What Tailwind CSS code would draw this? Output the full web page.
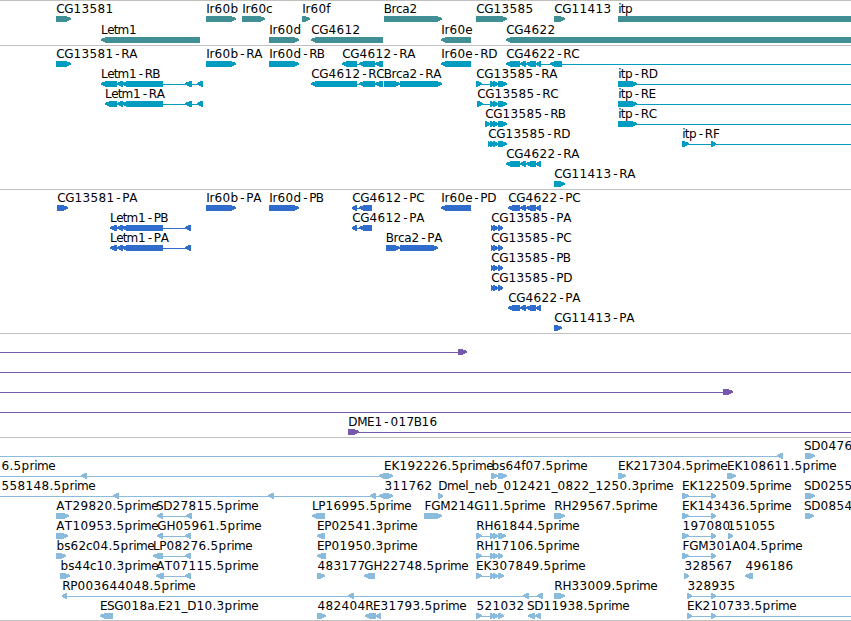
<!DOCTYPE html>
<html lang="en">
  <head>
    <meta charset="UTF-8" />
    <meta name="viewport" content="width=device-width, initial-scale=1.0" />
    <title>Genome Browser</title>
    <script src="https://cdn.jsdelivr.net/npm/@tailwindcss/browser@4"></script>
  </head>
  <body class="bg-white overflow-hidden">
    <main class="flex flex-col w-[851px] h-[621px] border-b border-[#c0c0c0] font-['DejaVu_Sans',sans-serif] text-[12px]">
      <section class="h-[45px] border-t border-[#c0c0c0]">
        <svg id="genes" class="block w-full h-full fill-[#408f95]" viewBox="0 1 851 44"></svg>
      </section>
      <section class="h-[144px] border-t border-[#c0c0c0]">
        <svg id="transcripts" class="block w-full h-full fill-[#009dc0]" viewBox="0 46 851 143"></svg>
      </section>
      <section class="h-[144px] border-t border-[#c0c0c0]">
        <svg id="proteins" class="block w-full h-full fill-[#306ccb]" viewBox="0 190 851 143"></svg>
      </section>
      <section class="h-[104px] border-t border-[#c0c0c0]">
        <svg id="clones" class="block w-full h-full fill-[#7459ad]" viewBox="0 334 851 103"></svg>
      </section>
      <section class="h-[183px] border-t border-[#c0c0c0]">
        <svg id="ests" class="block w-full h-full fill-[#8abbdc]" viewBox="0 438 851 182"></svg>
      </section>
    </main>

    <script>
      // [top, label, label x, direction, blocks, connector]
      const letm = [[117, 123], [122, 163], [185, 192], [197, 203]];
      const cg4622 = [[520, 526], [526, 536], [536, 541]];
      const cg13585 = [[490, 494], [493, 498], [498, 507]];
      const pcg13585 = [[491, 494], [493, 498], [498, 503]];
      const itp = [[682, 689], [711, 716]];

      const tracks = {
        genes: [
          [16, "CG13581", 56, ">", [[56, 71]]],
          [16, "Ir60b", 206, ">", [[206, 236]]],
          [16, "Ir60c", 242, ">", [[242, 265]]],
          [16, "Ir60f", 302, ">", [[302, 310]]],
          [16, "Brca2", 384, ">", [[384, 442]]],
          [16, "CG13585", 476, ">", [[476, 507]]],
          [16, "CG11413", 554, ">", [[554, 565]]],
          [16, "itp", 618, ">", [[618, 870]]],
          [37, "Letm1", 101, "<", [[101, 200]]],
          [37, "Ir60d", 269, ">", [[269, 299]]],
          [37, "CG4612", 311, "<", [[311, 383]]],
          [37, "Ir60e", 441, "<", [[441, 471]]],
          [37, "CG4622", 506, "<", [[506, 870]]],
        ],
        transcripts: [
          [61, "CG13581-RA", 56, ">", [[56, 71]]],
          [61, "Ir60b-RA", 206, ">", [[206, 236]]],
          [61, "Ir60d-RB", 269, ">", [[269, 299]]],
          [61, "CG4612-RA", 342, "<", [[342, 357], [359, 375], [375, 383]], [350, 383]],
          [61, "Ir60e-RD", 441, "<", [[441, 471]]],
          [61, "CG4622-RC", 506, "<", [[506, 520], ...cg4622, [550, 562]], [510, 851]],
          [81, "Letm1-RB", 101, "<", [[101, 117], ...letm], [110, 203]],
          [81, "CG4612-RC", 311, "<", [[311, 357], [359, 375], [375, 383]], [320, 383]],
          [81, "Brca2-RA", 384, ">", [[384, 400], [400, 442]]],
          [81, "CG13585-RA", 476, ">", [[476, 482], ...cg13585], [476, 500]],
          [81, "itp-RD", 618, ">", [[618, 637]], [630, 851]],
          [101, "Letm1-RA", 105, "<", [[105, 117], ...letm], [110, 203]],
          [101, "CG13585-RC", 477, ">", [[477, 483], ...cg13585], [477, 500]],
          [101, "itp-RE", 618, ">", [[618, 637]], [630, 851]],
          [121, "CG13585-RB", 485, ">", [[485, 490], ...cg13585], [485, 500]],
          [121, "itp-RC", 618, ">", [[618, 637]], [630, 851]],
          [141, "CG13585-RD", 488, ">", [[488, 491], ...cg13585], [488, 500]],
          [141, "itp-RF", 682, ">", itp, [682, 851]],
          [161, "CG4622-RA", 506, "<", [[506, 520], ...cg4622], [510, 541]],
          [181, "CG11413-RA", 554, ">", [[554, 565]]],
        ],
        proteins: [
          [205, "CG13581-PA", 57, ">", [[57, 68]]],
          [205, "Ir60b-PA", 206, ">", [[206, 236]]],
          [205, "Ir60d-PB", 269, ">", [[269, 299]]],
          [205, "CG4612-PC", 352, "<", [[352, 357], [359, 372]], [355, 372]],
          [205, "Ir60e-PD", 441, "<", [[441, 471]]],
          [205, "CG4622-PC", 508, "<", [[508, 520], ...cg4622], [512, 541]],
          [225, "Letm1-PB", 110, "<", [[110, 117], [117, 123], [122, 163], [185, 191]], [112, 191]],
          [225, "CG4612-PA", 352, "<", [[352, 357], [359, 372]], [355, 372]],
          [225, "CG13585-PA", 491, ">", pcg13585],
          [245, "Letm1-PA", 110, "<", [[110, 117], [117, 123], [122, 163], [185, 191]], [112, 191]],
          [245, "Brca2-PA", 386, ">", [[386, 400], [400, 438]]],
          [245, "CG13585-PC", 491, ">", pcg13585],
          [265, "CG13585-PB", 491, ">", pcg13585],
          [285, "CG13585-PD", 491, ">", pcg13585],
          [305, "CG4622-PA", 508, "<", [[508, 520], ...cg4622], [512, 541]],
          [325, "CG11413-PA", 554, ">", [[554, 562]]],
        ],
        clones: [
          [349, "", 0, ">", [[458, 467]], [0, 460]],
          [369, "", 0, ">", [], [0, 851]],
          [389, "", 0, ">", [[723, 733]], [0, 725]],
          [409, "", 0, ">", [], [0, 851]],
          [429, "DME1-017B16", 348, ">", [[348, 359]], [350, 851]],
        ],
        ests: [
          [453, "", 0, "<", [[777, 783]], [0, 783]],
          [453, "SD0476", 804, ">", [[805, 815]]],
          [473, "6.5prime", 1, "<", [[81, 87], [379, 386]], [0, 386]],
          [473, "EK192226.5prime", 384, ">", [[386, 393]]],
          [473, "bs64f07.5prime", 491, ">", [[491, 498], [498, 507]]],
          [473, "EK217304.5prime", 618, ">", [[618, 626]]],
          [473, "EK108611.5prime", 727, ">", [[727, 736]]],
          [493, "558148.5prime", 1, "<", [[113, 119], [268, 274], [370, 376], [379, 386]], [0, 386]],
          [493, "311762", 384, ">", [[386, 393]]],
          [493, "Dmel_neb_012421_0822_1250.3prime", 438, ">", [[438, 443]]],
          [493, "EK122509.5prime", 682, ">", itp, [682, 716]],
          [493, "SD0255", 804, ">", [[805, 815]]],
          [513, "AT29820.5prime", 56, ">", [[56, 69]]],
          [513, "SD27815.5prime", 156, "<", [[157, 163], [186, 192]], [157, 192]],
          [513, "LP16995.5prime", 312, "<", [[312, 325]]],
          [513, "FGM214G11.5prime", 424, ">", [[424, 442]]],
          [513, "RH29567.5prime", 554, ">", [[554, 565]]],
          [513, "EK143436.5prime", 682, ">", itp, [682, 716]],
          [513, "SD0854", 804, ">", [[805, 814]]],
          [533, "AT10953.5prime", 56, ">", [[56, 68]]],
          [533, "GH05961.5prime", 157, "<", [[157, 163], [185, 191]], [157, 191]],
          [533, "EP02541.3prime", 317, "<", [[317, 325]]],
          [533, "RH61844.5prime", 476, ">", [[476, 482], [490, 494], [493, 498], [498, 506]], [476, 500]],
          [533, "197080", 682, ">", itp, [682, 716]],
          [533, "151055", 727, ">", [[728, 733]]],
          [553, "bs62c04.5prime", 56, ">", [[56, 66]]],
          [553, "LP08276.5prime", 153, "<", [[153, 163], [185, 191]], [160, 191]],
          [553, "EP01950.3prime", 317, "<", [[317, 326]]],
          [553, "RH17106.5prime", 476, ">", [[476, 482], [490, 494], [493, 498], [498, 503]], [476, 500]],
          [553, "FGM301A04.5prime", 682, ">", itp, [682, 716]],
          [573, "bs44c10.3prime", 60, ">", [[60, 70]]],
          [573, "AT07115.5prime", 156, "<", [[156, 164], [185, 191]], [160, 191]],
          [573, "483177", 317, ">", [[317, 325]]],
          [573, "GH22748.5prime", 364, "<", [[364, 375]]],
          [573, "EK307849.5prime", 476, ">", [[476, 482], [490, 494], [493, 498], [498, 504]], [476, 500]],
          [573, "328567", 684, ">", [[684, 689]]],
          [573, "496186", 745, "<", [[745, 753]]],
          [593, "RP003644048.5prime", 62, "<", [[62, 67], [348, 354], [523, 529], [537, 543]], [62, 543]],
          [593, "RH33009.5prime", 554, ">", [[554, 565]]],
          [593, "328935", 687, ">", [[687, 692], [711, 716]], [687, 851]],
          [613, "ESG018a.E21_D10.3prime", 100, "<", [[100, 113]]],
          [613, "482404", 317, ">", [[317, 326]]],
          [613, "RE31793.5prime", 365, "<", [[365, 376], [376, 381]]],
          [613, "521032", 476, ">", [[476, 482], [490, 494], [493, 498], [498, 504]], [476, 500]],
          [613, "SD11938.5prime", 527, "<", [[528, 535], [535, 541]]],
          [613, "EK210733.5prime", 687, ">", [[687, 692], [711, 716]], [687, 851]],
        ],
      };

      // letter advances in pixels, anything missing is 8
      const advance = {
        G: 9, D: 9, H: 9, M: 10, E: 7, F: 7, P: 7, B: 7, S: 7, L: 6, I: 3,
        m: 11, e: 7, a: 7, c: 6, s: 6, r: 5, t: 3.5, f: 4, i: 3, l: 3, ".": 4, _: 6,
      };

      function labelSvg(text, x, y) {
        const xs = [];
        x += 0.4;
        for (const ch of text) {
          const w = advance[ch] || 8;
          xs.push(x + w / 2);
          x += w;
        }
        return `<text class="fill-black" text-anchor="middle" x="${xs.join(" ")}" y="${y}">${text}</text>`;
      }

      function blockSvg(start, end, dir, y) {
        const tip = Math.min(5, (end - start) * 0.75);
        const flat = dir == ">" ? end - tip : start + tip;
        const back = dir == ">" ? start : end;
        const point = dir == ">" ? end : start;
        return `<polygon shape-rendering="crispEdges" points="${back},${y} ${flat},${y} ${point},${y + 2} ${point},${y + 3.6} ${flat},${y + 6} ${back},${y + 6}" />`;
      }

      for (const id in tracks) {
        let svg = "";
        tracks[id].forEach(function ([y, label, x, dir, blocks, line]) {
          if (line) {
            svg += `<rect x="${line[0]}" y="${y + 3}" width="${line[1] - line[0]}" height="1" />`;
          }
          blocks.forEach(function (b) {
            svg += blockSvg(b[0], b[1], dir, y);
          });
          if (label) {
            svg += labelSvg(label, x, y - 3);
          }
        });
        document.getElementById(id).innerHTML = svg;
      }
    </script>
  </body>
</html>
